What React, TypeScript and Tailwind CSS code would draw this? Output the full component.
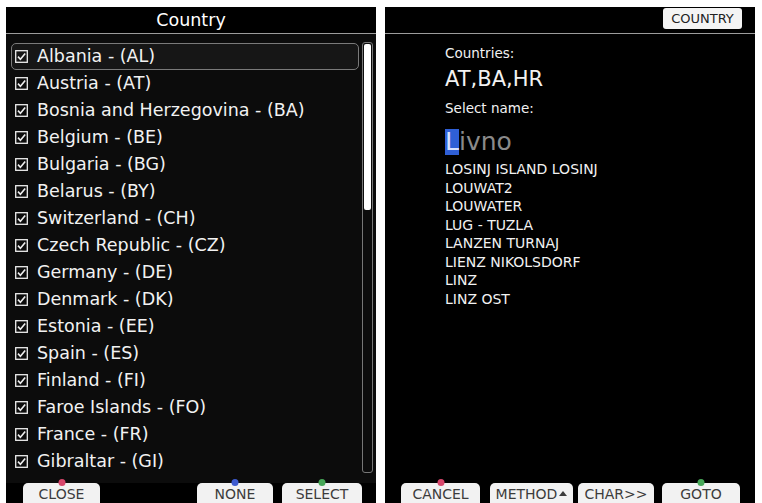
import React from "react";

type Btn = { label: React.ReactNode; w: string; ml: string; dot?: string };

const countries = [
  "Albania - (AL)",
  "Austria - (AT)",
  "Bosnia and Herzegovina - (BA)",
  "Belgium - (BE)",
  "Bulgaria - (BG)",
  "Belarus - (BY)",
  "Switzerland - (CH)",
  "Czech Republic - (CZ)",
  "Germany - (DE)",
  "Denmark - (DK)",
  "Estonia - (EE)",
  "Spain - (ES)",
  "Finland - (FI)",
  "Faroe Islands - (FO)",
  "France - (FR)",
  "Gibraltar - (GI)",
];

const names = [
  "LOSINJ ISLAND LOSINJ",
  "LOUWAT2",
  "LOUWATER",
  "LUG - TUZLA",
  "LANZEN TURNAJ",
  "LIENZ NIKOLSDORF",
  "LINZ",
  "LINZ OST",
];

function CheckBox() {
  return (
    <svg width="13" height="13" viewBox="0 0 13 13" className="shrink-0">
      <rect x="0.7" y="0.7" width="11.6" height="11.6" fill="none" stroke="#eeeeee" strokeWidth="1.3" />
      <path d="M3 6.6 L5.4 9.2 L10.2 3.4" fill="none" stroke="#eeeeee" strokeWidth="1.6" />
    </svg>
  );
}

function SoftKey({ label, w, ml, dot }: Btn) {
  return (
    <div
      className={`relative h-[20px] ${w} ${ml} bg-[#f2f2f2] rounded-t-[5px] flex items-center justify-center pt-[2px] text-[14px] leading-none text-[#3c3c3c]`}
    >
      {dot && (
        <span className={`absolute -top-[4px] left-1/2 -translate-x-1/2 w-[7px] h-[7px] rounded-full ${dot}`} />
      )}
      {label}
    </div>
  );
}

function CountryPanel() {
  return (
    <div className="w-[370px] h-full bg-black flex flex-col">
      <div className="h-[26px] flex items-center justify-center text-[17.5px] text-white pt-[1px]">
        Country
      </div>
      <div className="h-px bg-[#9c9c9c]" />
      <div className="flex-1 flex bg-[#0c0c0c]">
        <div className="flex-1 pt-[9px] pl-[6px] pr-[3px]">
          {countries.map((c, i) => (
            <div
              key={c}
              className={`h-[27px] flex items-center gap-[9px] pl-[3px] text-[17.5px] text-[#f2f2f2] ${
                i === 0 ? "border border-[#7a7a7a] rounded-[5px] bg-[#161616] -ml-px" : ""
              }`}
            >
              <CheckBox />
              <span className="whitespace-nowrap">{c}</span>
            </div>
          ))}
        </div>
        <div className="w-[11px] mr-[3px] mt-[8px] mb-[10px] border border-[#777] rounded-[3px] p-[1px]">
          <div className="h-[166px] bg-white rounded-[2px]" />
        </div>
      </div>
      <div className="h-[20px] flex items-end">
        <SoftKey label="CLOSE" w="w-[77px]" ml="ml-[17px]" dot="bg-[#d8476c]" />
        <SoftKey label="NONE" w="w-[76px]" ml="ml-[97px]" dot="bg-[#3d5bd0]" />
        <SoftKey label="SELECT" w="w-[80px]" ml="ml-[9px]" dot="bg-[#47a858]" />
      </div>
    </div>
  );
}

function NamePanel() {
  return (
    <div className="w-[370px] h-full bg-black flex flex-col">
      <div className="h-[26px] flex justify-end">
        <div className="mt-[1px] mr-[13px] h-[21px] w-[79px] bg-[#f4f4f4] rounded-[3px] flex items-center justify-center text-[13px] text-[#222]">
          COUNTRY
        </div>
      </div>
      <div className="h-px bg-[#9c9c9c]" />
      <div className="flex-1 pl-[60px] pt-[11px] text-[#f2f2f2]">
        <div className="text-[13.5px] leading-[16px]">Countries:</div>
        <div className="mt-[5px] text-[21px] leading-[26px]">AT,BA,HR</div>
        <div className="mt-[8px] text-[13.5px] leading-[16px]">Select name:</div>
        <div className="mt-[13px] text-[25px] leading-[26px] text-[#8a8a8a] flex">
          <span className="bg-[#2f5fd6] text-[#d8e2ff]">L</span>
          <span>ivno</span>
        </div>
        <div className="mt-[5px] text-[14px]">
          {names.map((n) => (
            <div key={n} className="h-[18.5px] leading-[18px] whitespace-nowrap">
              {n}
            </div>
          ))}
        </div>
      </div>
      <div className="h-[20px] flex items-end">
        <SoftKey label="CANCEL" w="w-[79px]" ml="ml-[16px]" dot="bg-[#d8476c]" />
        <SoftKey
          label={
            <span className="flex items-center gap-[2px]">
              METHOD
              <span className="w-0 h-0 border-l-[4px] border-r-[4px] border-b-[5px] border-l-transparent border-r-transparent border-b-[#3c3c3c] -mt-[2px]" />
            </span>
          }
          w="w-[83px]"
          ml="ml-[10px]"
        />
        <SoftKey label="CHAR>>" w="w-[76px]" ml="ml-[5px]" />
        <SoftKey label="GOTO" w="w-[78px]" ml="ml-[8px]" dot="bg-[#47a858]" />
      </div>
    </div>
  );
}

export default function App() {
  return (
    <div className="w-[762px] h-[503px] bg-white flex gap-[9px] pl-[6px] pt-[7px] overflow-hidden font-['DejaVu_Sans',sans-serif]">
      <CountryPanel />
      <NamePanel />
    </div>
  );
}
